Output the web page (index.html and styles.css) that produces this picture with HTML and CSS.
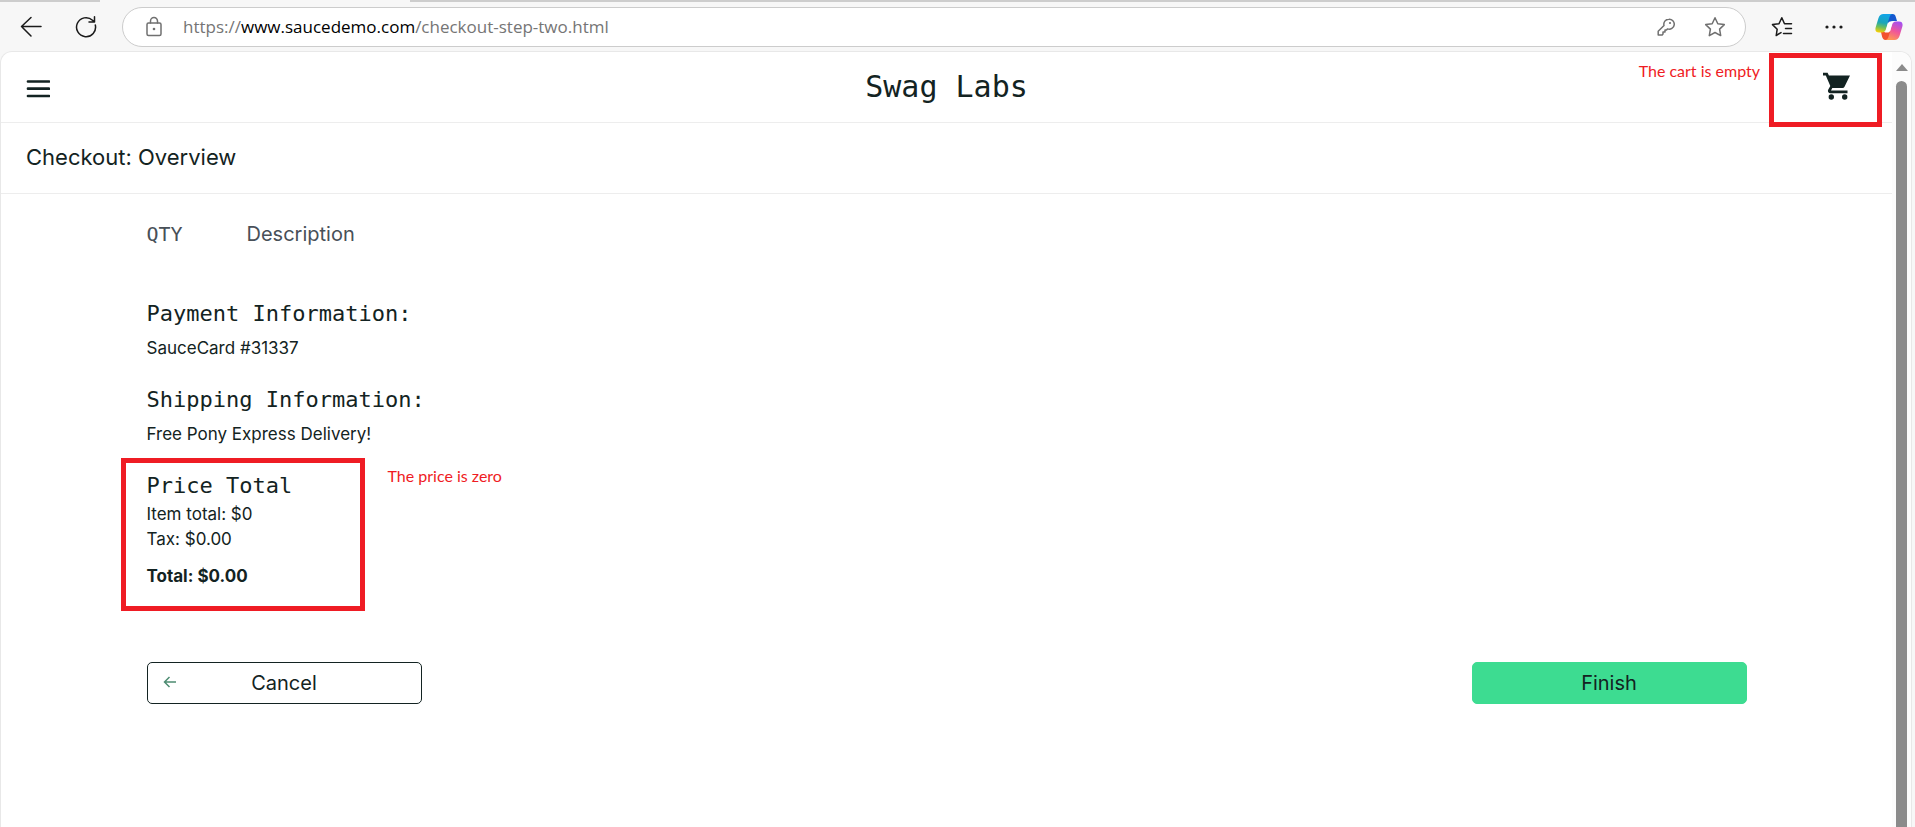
FILE: index.html
```html
<!DOCTYPE html>
<html lang="en">
<head>
<meta charset="utf-8">
<title>Swag Labs</title>
<link rel="stylesheet" href="styles.css">
</head>
<body>
<div class="tabstrip"><div class="active-tab"></div></div>
<nav class="toolbar" aria-label="Browser">
  <button class="tool" aria-label="Back"><svg width="22" height="22" viewBox="0 0 22 22"><path d="M21 10.500H1.500M11 1.500L1.500 10.500L11 20"/></svg></button>
  <button class="tool" aria-label="Refresh"><svg width="22" height="22" viewBox="0 0 22 22"><path d="M20.300 9A9.500 9.500 0 1 1 17.500 4.200L19.500 6M19.500 .8V6H14"/></svg></button>
  <div class="address">
    <button class="tool muted" aria-label="Site information"><svg width="18" height="22" viewBox="0 0 18 22"><rect x="2" y="7" width="14" height="12.500" rx="1.500"/><path d="M5.500 7V5a3.500 3.500 0 0 1 7 0V7"/><circle class="solid" cx="9" cy="13" r="1.300"/></svg></button>
    <div class="url">https://<span class="host">www.saucedemo.com</span>/checkout-step-two.html</div>
    <button class="tool muted" aria-label="Passwords"><svg width="18" height="18" viewBox="0 0 18 18"><path d="M11.800 1.200a5 5 0 1 1-1.200 9.700L9.500 12H8v2H6v2l-.8.900H1.200V13.300L7 7.500a5 5 0 0 1 4.800-6.300Z"/><circle class="solid" cx="13" cy="5" r="1.100"/></svg></button>
    <button class="tool muted" aria-label="Add to favorites"><svg width="22" height="22" viewBox="0 0 22 22"><path d="M11 1.800L13.800 7.700L20.300 8.600L15.600 13.100L16.700 19.600L11 16.500L5.300 19.600L6.400 13.100L1.700 8.600L8.200 7.700Z"/></svg></button>
  </div>
  <div class="tools">
    <button class="tool" aria-label="Favorites"><svg width="22" height="22" viewBox="0 0 22 22"><path d="M10 16.600L5.200 19.500L6.200 13.200L1.500 8.600L8 7.700L10.800 1.800L13.500 7.700H20.500M14.500 12.500H20.500M12.500 17.500H20.500"/></svg></button>
    <button class="tool" aria-label="Settings and more"><svg width="22" height="22" viewBox="0 0 22 22"><g class="solid"><circle cx="4" cy="11" r="1.600"/><circle cx="11" cy="11" r="1.600"/><circle cx="18" cy="11" r="1.600"/></g></svg></button>
    <button class="tool" aria-label="Copilot"><svg class="copilot" width="28" height="28" viewBox="0 0 28 28">
      <defs>
        <linearGradient id="cool" x1="0.400" y1="0" x2="0.200" y2="1"><stop offset="0" stop-color="#12a5e8"/><stop offset=".45" stop-color="#1aa6b8"/><stop offset=".7" stop-color="#6cbf5c"/><stop offset="1" stop-color="#ffd000"/></linearGradient>
        <linearGradient id="warm" x1="0.700" y1="0" x2="0.300" y2="1"><stop offset="0" stop-color="#a550f0"/><stop offset=".5" stop-color="#f0569a"/><stop offset="1" stop-color="#ff9a50"/></linearGradient>
      </defs>
      <path fill="#1458cf" d="M13 1h4.500c2 0 2.800 1.200 3.400 3.200L22 8h-4c-2 0-3 1-3.500 3L11 8Z"/>
      <path fill="#f2522e" d="M15 27h-4.500c-2 0-2.800-1.200-3.400-3.200L6 19h4c2 0 3-1 3.500-3l3.500 4Z"/>
      <path fill="url(#cool)" d="M8.500 1H18c-2 0-3 1.500-3.600 3.500L11 16c-.7 2.200-1.800 3.500-4 3.500H4c-3 0-4.200-2-3.300-5.200L3.500 5C4.400 2.200 6 1 8.500 1Z"/>
      <path fill="url(#warm)" d="M19.500 27H10c2 0 3-1.500 3.600-3.500L17 12c.7-2.200 1.800-3.500 4-3.500h3c3 0 4.200 2 3.300 5.200L24.500 23c-.9 2.800-2.500 4-5 4Z"/>
      <path fill="#ffffff" d="M18.500 8.500c-1 .8-1.300 1.800-1.600 2.800L15 18c-.5 1-1.500 1.500-2.500 1.500H9.500c1-.8 1.300-1.800 1.600-2.800L13 10.500c.5-1.500 1.500-2 2.500-2Z"/>
    </svg></button>
  </div>
</nav>

<div class="frame">
  <div class="page">
    <header class="header">
      <button class="tool menu" aria-label="Open menu"><svg width="24" height="20" viewBox="0 0 24 20"><path d="M2 2.500H23M2 9.700H23M2 17H23"/></svg></button>
      <div class="brand">Swag Labs</div>
      <a class="cart" href="#cart" aria-label="Shopping cart"><svg width="28" height="28" viewBox="0 0 28 28"><path d="M0 .8h4.600l1.300 2.700H27L21.500 14.800q-.6 1.200-2 1.200H9.300L8 18.500h16.500v2.700H7.500c-2.200 0-3.200-2-2.200-3.800l2-3.500L2.800 3.500H0Z"/><circle cx="8.300" cy="25" r="2.700"/><circle cx="21.700" cy="25" r="2.700"/></svg></a>
      <div class="mark mark-cart"></div>
      <div class="note note-cart">The cart is empty</div>
    </header>
    <h1 class="title">Checkout: Overview</h1>
    <main class="content">
      <div class="columns"><div class="qty">QTY</div><div>Description</div></div>
      <section class="info">
        <h2>Payment Information:</h2>
        <p>SauceCard #31337</p>
      </section>
      <section class="info">
        <h2>Shipping Information:</h2>
        <p>Free Pony Express Delivery!</p>
      </section>
      <section class="price">
        <h2>Price Total</h2>
        <p>Item total: $0</p>
        <p>Tax: $0.00</p>
        <p class="total">Total: $0.00</p>
        <div class="mark mark-price"></div>
        <div class="note note-price">The price is zero</div>
      </section>
      <div class="actions">
        <button class="btn cancel"><svg width="14" height="14" viewBox="0 0 14 14"><path d="M13 7H1.500M6.500 2L1.500 7L6.500 12"/></svg>Cancel</button>
        <button class="btn finish">Finish</button>
      </div>
    </main>
  </div>
  <div class="scrollbar"><div class="arrow"></div><div class="thumb"></div></div>
</div>
</body>
</html>
```
FILE: styles.css
```css
* { box-sizing: border-box; }
body {
  margin: 0;
  height: 100vh;
  display: flex;
  flex-direction: column;
  overflow: hidden;
  background: #f7f7f7;
  color: #132322;
  font-family: Inter, sans-serif;
}
h1, h2, p { margin: 0; }
button { font: inherit; color: inherit; cursor: pointer; }
svg { display: block; }

.tabstrip { height: 2px; flex: none; padding-left: 100px; background: #cdcdcd; }
.active-tab { width: 310px; height: 2px; background: #f7f7f7; }

.toolbar { height: 49px; flex: none; display: flex; align-items: center; gap: 25px; padding: 0 12px 0 20px; }
.toolbar > .tool + .tool { margin-left: 8px; }
.tools { display: flex; align-items: center; gap: 30px; }
.tool { flex: none; display: block; padding: 0; border: 0; background: none; }
.tool svg { fill: none; stroke: #1b1b1b; stroke-width: 1.5; stroke-linejoin: round; stroke-linecap: round; }
.tool .solid { fill: #1b1b1b; stroke: none; }
.tool.muted svg { stroke: #707070; }
.tool.muted .solid { fill: #707070; }
.tool .copilot { stroke: none; }
.address {
  flex: 1;
  height: 40px;
  display: flex;
  align-items: center;
  gap: 29px;
  padding: 0 19px 0 22px;
  border: 1px solid #cccccc;
  border-radius: 20px;
  background: #ffffff;
}
.url { flex: 1; margin-left: -9px; font-family: "Open Sans", sans-serif; font-size: 17px; color: #757575; white-space: nowrap; }
.host { color: #000000; }

.frame {
  flex: 1;
  min-height: 0;
  display: flex;
  margin: 0 3px 0 0;
  border: 1px solid #e8e8e8;
  border-bottom: 0;
  border-radius: 12px 12px 0 0;
  background: #ffffff;
}
.page { flex: 1; }
.scrollbar { width: 19px; display: flex; flex-direction: column; align-items: center; gap: 10px; padding-top: 12px; background: #fcfcfc; border-top-right-radius: 12px; }
.arrow { border: 6px solid transparent; border-top: 0; border-bottom: 7px solid #8b8b8b; }
.thumb { flex: 1; width: 11px; border-radius: 6px 6px 0 0; background: #8b8b8b; }

.header { position: relative; height: 71px; display: grid; grid-template-columns: 1fr auto 1fr; align-items: center; padding: 0 25px; border-bottom: 1px solid #ededed; }
.menu { justify-self: start; padding-top: 4px; }
.menu svg { stroke: #132322; stroke-width: 2.700; }
.brand { font-family: "DejaVu Sans Mono", monospace; font-size: 30px; line-height: 40px; }
.cart { justify-self: end; margin-right: 16px; padding-bottom: 2px; fill: #132322; }
.title { height: 71px; padding-left: 25px; border-bottom: 1px solid #ededed; font-size: 22px; font-weight: 400; line-height: 68px; }

.content { max-width: 1600px; margin: 0 auto; padding-top: 28px; }
.columns { display: flex; height: 68px; font-size: 20px; line-height: 24px; color: #485058; }
.qty { width: 100px; font-family: "DejaVu Sans Mono", monospace; }
.info { height: 86px; }
h2 { padding: 10px 0; font-family: "DejaVu Sans Mono", monospace; font-size: 22px; font-weight: 400; line-height: 28px; }
p { font-size: 17px; line-height: 25px; }
.info p { line-height: 20px; }
.price { position: relative; height: 200px; }
.price h2 { padding-bottom: 2px; }
.total { padding-top: 12px; font-weight: 700; }

.actions { display: flex; justify-content: space-between; }
.btn { position: relative; width: 275px; height: 42px; padding: 0; border: 1px solid #132322; border-radius: 5px; background: #ffffff; font-size: 20px; font-weight: 400; }
.btn svg { position: absolute; left: 15px; top: 12px; fill: none; stroke: #4d8c72; stroke-width: 1.500; }
.finish { border-color: #3ddc91; background: #3ddc91; }

.mark { position: absolute; border: 5px solid #ef1c24; pointer-events: none; }
.mark-cart { right: 10px; top: 1px; width: 113px; height: 74px; }
.mark-price { left: -26px; top: -4px; width: 244px; height: 153px; }
.note { position: absolute; font-family: Lato, sans-serif; font-size: 16px; line-height: 20px; color: #ef1c24; white-space: nowrap; }
.note-cart { right: 132px; top: 9px; }
.note-price { left: 241px; top: 4px; }
```
